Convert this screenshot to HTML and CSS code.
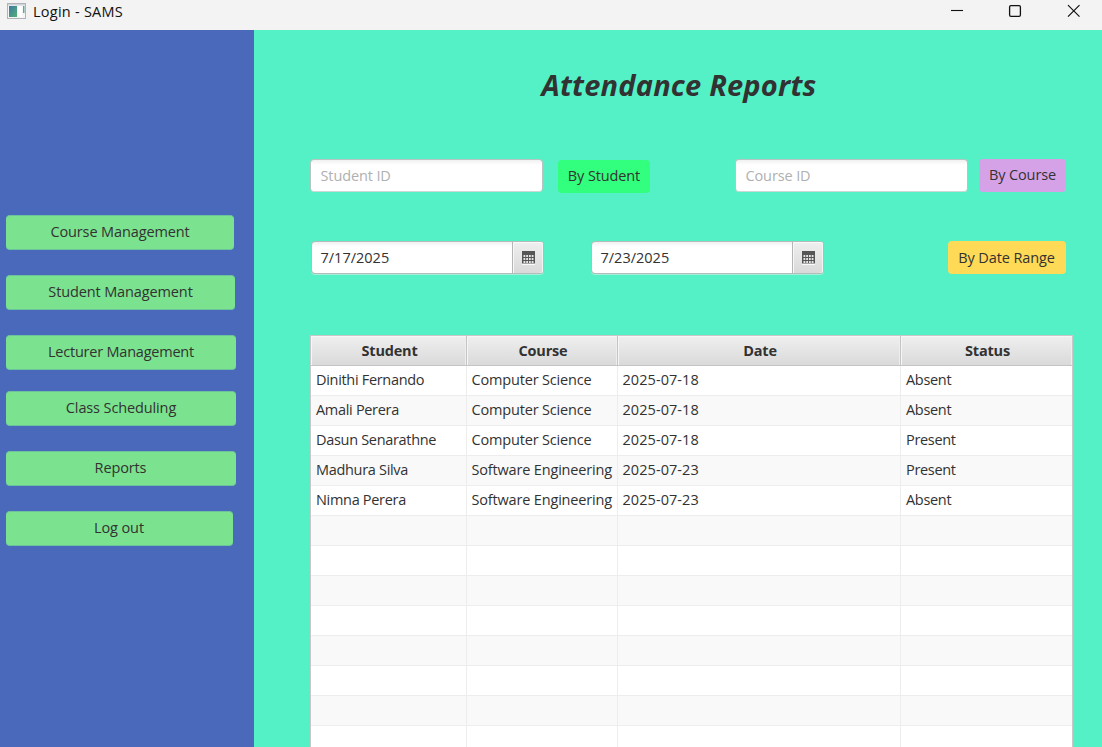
FILE: index.html
```html
<!DOCTYPE html>
<html lang="en">
<head>
<meta charset="utf-8">
<title>Login - SAMS</title>
<link rel="stylesheet" href="styles.css">
</head>
<body>
<header class="titlebar">
  <svg class="app-icon" width="20" height="17" viewBox="0 0 20 17">
    <defs><linearGradient id="g" x1="0" y1="0" x2="1" y2="1"><stop offset="0" stop-color="#3d78a8"/><stop offset="1" stop-color="#55b070"/></linearGradient></defs>
    <rect x=".5" y=".5" width="18" height="15" fill="#f4f6f6" stroke="#b0b4b8"/>
    <path d="M1 1h17v1.500H1z" fill="#cfd4d8"/>
    <rect x="2" y="3" width="8" height="11" fill="url(#g)"/>
    <path d="M11 3h4v11h-4z" fill="#fff"/>
    <path d="M16 3h1.500v7H16z" fill="#62a59a"/>
  </svg>
  <span class="app-title">Login - SAMS</span>
  <svg class="win-controls" width="134" height="16" viewBox="0 0 134 16" fill="none" stroke="#111">
    <path d="M2 8.500h12" stroke-width="1.100"/>
    <rect x="60.600" y="3.600" width="10.800" height="10.800" rx="1.300" stroke-width="1.300"/>
    <path d="M119 3.200l11.500 11.500M130.500 3.200l-11.500 11.500" stroke-width="1.200"/>
  </svg>
</header>
<main class="app">
  <nav class="sidebar">
    <button class="nav-btn course"><span>Course Management</span></button>
    <button class="nav-btn student"><span>Student Management</span></button>
    <button class="nav-btn lecturer"><span>Lecturer Management</span></button>
    <button class="nav-btn classes"><span>Class Scheduling</span></button>
    <button class="nav-btn reports"><span>Reports</span></button>
    <button class="nav-btn logout"><span>Log out</span></button>
  </nav>
  <section class="content">
    <h1 class="heading"><span>Attendance Reports</span></h1>
    <div class="row ids">
      <input class="field" placeholder="Student ID">
      <button class="btn green"><span>By Student</span></button>
      <input class="field second" placeholder="Course ID">
      <button class="btn purple"><span>By Course</span></button>
    </div>
    <div class="row dates">
      <div class="picker"><span class="date">7/17/2025</span><span class="cal">
        <svg width="13" height="14" viewBox="0 0 13 14"><path d="M0 0h13v14H0z" fill="#fafafa"/><path d="M0 0h13v12.500H0z" fill="#555"/><path d="M1.500 5h10M1.500 8h10M1.500 11h10" stroke="#e4e4e4" stroke-width="1.800" stroke-dasharray="1.800 .93"/></svg>
      </span></div>
      <div class="picker"><span class="date">7/23/2025</span><span class="cal">
        <svg width="13" height="14" viewBox="0 0 13 14"><path d="M0 0h13v14H0z" fill="#fafafa"/><path d="M0 0h13v12.500H0z" fill="#555"/><path d="M1.500 5h10M1.500 8h10M1.500 11h10" stroke="#e4e4e4" stroke-width="1.800" stroke-dasharray="1.800 .93"/></svg>
      </span></div>
      <button class="btn yellow"><span>By Date Range</span></button>
    </div>
    <div class="table">
      <div class="tr head"><span>Student</span><span>Course</span><span>Date</span><span>Status</span></div>
      <div class="tr"><span>Dinithi Fernando</span><span>Computer Science</span><span>2025-07-18</span><span>Absent</span></div>
      <div class="tr"><span>Amali Perera</span><span>Computer Science</span><span>2025-07-18</span><span>Absent</span></div>
      <div class="tr"><span>Dasun Senarathne</span><span>Computer Science</span><span>2025-07-18</span><span>Present</span></div>
      <div class="tr"><span>Madhura Silva</span><span>Software Engineering</span><span>2025-07-23</span><span>Present</span></div>
      <div class="tr"><span>Nimna Perera</span><span>Software Engineering</span><span>2025-07-23</span><span>Absent</span></div>
      <div class="tr"><span></span><span></span><span></span><span></span></div>
      <div class="tr"><span></span><span></span><span></span><span></span></div>
      <div class="tr"><span></span><span></span><span></span><span></span></div>
      <div class="tr"><span></span><span></span><span></span><span></span></div>
      <div class="tr"><span></span><span></span><span></span><span></span></div>
      <div class="tr"><span></span><span></span><span></span><span></span></div>
      <div class="tr"><span></span><span></span><span></span><span></span></div>
      <div class="tr"><span></span><span></span><span></span><span></span></div>
    </div>
  </section>
</main>
</body>
</html>
```
FILE: styles.css
```css
* { box-sizing: border-box; }
body {
  margin: 0;
  height: 747px;
  overflow: hidden;
  font: 14.5px/20px "Open Sans", "Noto Sans", sans-serif;
  letter-spacing: -0.12px;
  color: #323232;
  background: #55f1c6;
}
button, input { font: inherit; letter-spacing: inherit; color: inherit; border: 0; padding: 0; }
.titlebar { height: 30px; background: #f3f3f3; display: flex; align-items: flex-start; color: #111; letter-spacing: 0.25px; }
.app-icon { margin: 3px 0 0 7px; }
.app-title { margin: 2px auto 0 6px; }
.win-controls { margin: 2px 19px 0 0; }
.app { display: flex; height: 717px; }
.sidebar { width: 254px; background: #4a69bb; padding: 185px 0 0 6px; display: flex; flex-direction: column; gap: 25px; }
.nav-btn {
  height: 35px;
  width: 230px;
  flex: none;
  border-radius: 4px;
  background: #7be28f;
  border-top: 1px solid #6cc39b;
  border-bottom: 1px solid #6cc39b;
  padding-bottom: 1px;
}
.course { width: 228px; }
.student { width: 229px; }
.lecturer { margin-bottom: -4px; letter-spacing: -0.22px; }
.reports, .logout { padding-right: 1px; }
.logout { width: 227px; }
.content { flex: 1; padding: 33px 29px 0 56px; }
.heading { margin: 0 0 0 -21px; width: 780px; font: italic bold 29px/44px "Open Sans", sans-serif; letter-spacing: 0.2px; text-align: center; }
.row { display: flex; align-items: flex-start; }
.ids { margin: 50px 0 0; height: 84px; }
.field {
  width: 233px;
  height: 33px;
  margin-top: 2px;
  padding: 0 9px 1px 9.500px;
  border: 1px solid #b8c4c1;
  border-bottom-color: #cdd8d5;
  border-radius: 4px;
  background: linear-gradient(#f1f1f1, #fff 5px);
  outline: none;
}
.field::placeholder { color: #b0b0b0; opacity: 1; }
.second { margin-left: 85px; }
.btn { border-radius: 4px; height: 33px; }
.green { margin: 3px 0 0 15px; width: 92px; padding-bottom: 2px; background: #32ff7e; }
.purple { margin: 2px 0 0 11px; width: 87px; padding-bottom: 2px; background: #d5a2e8; }
.yellow { margin: 0 0 0 124px; width: 118px; letter-spacing: -0.1px; background: #ffda57; }
.dates { height: 94px; padding-left: 0.500px; }
.picker {
  display: flex;
  width: 233px;
  height: 33px;
  margin-right: 47px;
  border: 1px solid #b2bcb9;
  border-radius: 4px;
  background: linear-gradient(#f1f1f1, #fff 5px);
  box-shadow: 0 1px 0 #a5eed7;
  letter-spacing: 0;
}
.picker + .picker { margin-right: 0; }
.date { flex: 1; padding: 6px 9px; }
.cal { width: 31px; padding: 9px 0 0 9px; line-height: 0; border-left: 1px solid #b5b5b5; border-radius: 0 3px 3px 0; background: linear-gradient(#efefef, #d9d9d9); box-shadow: inset 1px 1px #f8f8f8, inset -1px 0 #f3f3f3; }
.table { width: 763px; border: 1px solid #c8c8c8; border-bottom: 0; background: #fff; }
.tr { display: grid; grid-template-columns: 156px 151px 283px 1fr; height: 30px; }
.tr span { border-right: 1px solid #ededed; border-bottom: 1px solid #ededed; padding: 4px 0 0 5px; white-space: nowrap; }
.tr span:nth-child(1) { letter-spacing: -0.31px; }
.tr span:nth-child(2) { padding-left: 4.500px; letter-spacing: -0.17px; }
.tr span:nth-child(3) { padding-left: 4.500px; letter-spacing: 0.06px; }
.tr span:last-child { border-right: 0; letter-spacing: -0.32px; }
.tr:nth-child(odd) { background: #f9f9f9; }
.tr.head { font-weight: bold; background: linear-gradient(#efefef, #d9d9d9); }
.tr.head span { text-align: center; padding: 5px 0 0 2px; letter-spacing: -0.2px; border-color: #c4c4c4; box-shadow: inset 1px 1px #f6f6f6, inset -1px 0 #eee; }
```
